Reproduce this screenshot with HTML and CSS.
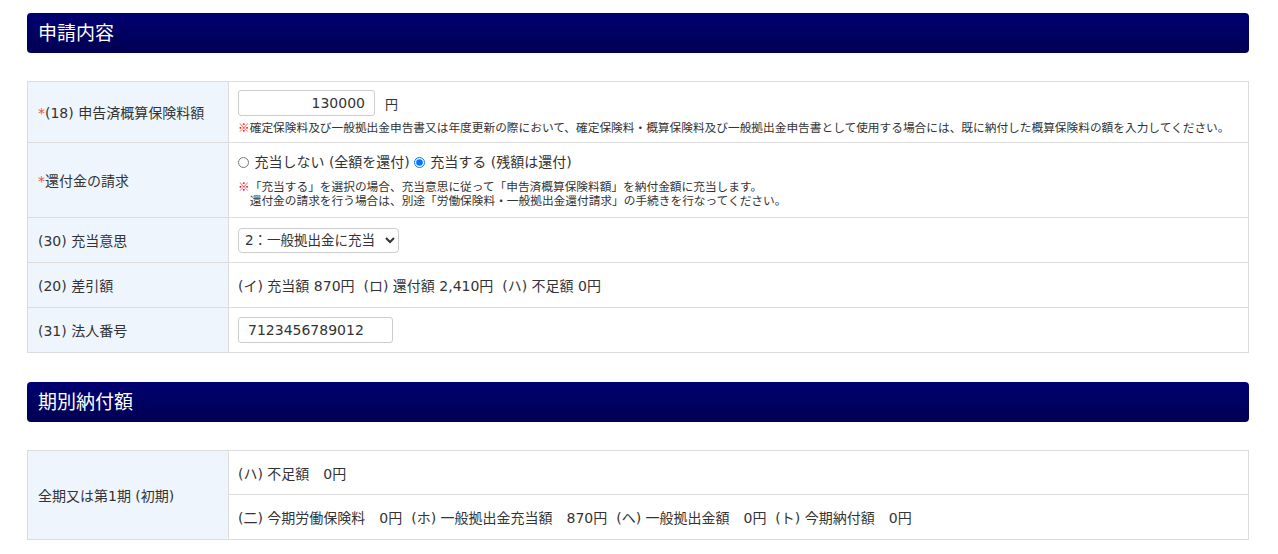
FILE: index.html
```html
<!DOCTYPE html>
<html lang="ja">
    <head>
        <meta charset="utf-8">
        <title>申請内容</title>
        <meta name="viewport" content="width=device-width,initial-scale=1">
        <link rel="stylesheet" href="styles.css">
    </head>
    <body>
        <main class="page">
            <section class="block">
                <h2 class="block-title">申請内容</h2>

                <table class="form-table">
                    <tr class="row-amount">
                        <th><span class="req">*</span>(18) 申告済概算保険料額</th>
                        <td>
                            <div class="field-line">
                                <input type="text" class="num-input" value="130000">
                                <span class="unit">円</span>
                            </div>
                            <p class="note"><span class="mark">※</span>確定保険料及び一般拠出金申告書又は年度更新の際において、確定保険料・概算保険料及び一般拠出金申告書として使用する場合には、既に納付した概算保険料の額を入力してください。</p>
                        </td>
                    </tr>
                    <tr class="row-refund">
                        <th><span class="req">*</span>還付金の請求</th>
                        <td>
                            <div class="radio-line">
                                <label><input type="radio" name="refund"> 充当しない (全額を還付)</label>
                                <label><input type="radio" name="refund" checked> 充当する (残額は還付)</label>
                            </div>
                            <div class="note note-multi">
                                <span class="note-line"><span class="mark">※</span>「充当する」を選択の場合、充当意思に従って「申告済概算保険料額」を納付金額に充当します。</span>
                                <span class="note-line indent">還付金の請求を行う場合は、別途「労働保険料・一般拠出金還付請求」の手続きを行なってください。</span>
                            </div>
                        </td>
                    </tr>
                    <tr class="row-plain">
                        <th>(30) 充当意思</th>
                        <td>
                            <select class="select">
                                <option>1：労働保険料に充当</option>
                                <option selected>2：一般拠出金に充当</option>
                            </select>
                        </td>
                    </tr>
                    <tr class="row-plain">
                        <th>(20) 差引額</th>
                        <td>(イ) 充当額 870円&nbsp; (ロ) 還付額 2,410円&nbsp; (ハ) 不足額 0円</td>
                    </tr>
                    <tr class="row-plain">
                        <th>(31) 法人番号</th>
                        <td><input type="text" class="text-input" value="7123456789012"></td>
                    </tr>
                </table>
            </section>

            <section class="block">
                <h2 class="block-title">期別納付額</h2>

                <table class="form-table">
                    <tr class="row-plain row-short">
                        <th rowspan="2">全期又は第1期 (初期)</th>
                        <td>(ハ) 不足額　0円</td>
                    </tr>
                    <tr class="row-plain">
                        <td>(二) 今期労働保険料　0円&nbsp; (ホ) 一般拠出金充当額　870円&nbsp; (ヘ) 一般拠出金額　0円&nbsp; (ト) 今期納付額　0円</td>
                    </tr>
                </table>
            </section>
        </main>
    </body>
</html>
```

FILE: styles.css
```css
html, body {
    margin: 0;
    padding: 0;
    background-color: #fff;
}

body {
    font-family: "DejaVu Sans", "Noto Sans CJK JP", sans-serif;
    font-size: 14px;
    color: #333;
}

.page {
    padding: 13px 29px 0 27px;
}

.block {
    margin-bottom: 29px;
}

.block-title {
    margin: 0 0 28px 0;
    height: 40px;
    line-height: 38px;
    padding: 0 11px;
    font-family: "Noto Sans CJK JP", sans-serif;
    font-size: 19px;
    font-weight: normal;
    color: #fff;
    border-radius: 4px;
    background: linear-gradient(#000072, #000052);
}

.form-table {
    width: 100%;
    border-collapse: collapse;
    border: 1px solid #dcdcdc;
}

.form-table th,
.form-table td {
    border: 1px solid #dcdcdc;
    text-align: left;
    vertical-align: middle;
    font-weight: normal;
}

.form-table th {
    width: 180px;
    padding: 0 10px;
    background-color: #eef5fd;
}

.form-table td {
    padding: 0 9px;
}

.req {
    color: #f0503c;
}

.row-amount td {
    padding-top: 8px;
    padding-bottom: 8px;
}

.row-amount th,
.row-refund th {
    height: 44px;
}

.row-plain th,
.row-plain td {
    height: 44px;
}

.row-short td {
    height: 43px;
}

.field-line {
    display: flex;
    align-items: center;
    gap: 10px;
}

.num-input,
.text-input {
    box-sizing: border-box;
    height: 26px;
    border: 1px solid #ccc;
    border-radius: 3px;
    padding: 0 9px;
    font-family: "DejaVu Sans", sans-serif;
    font-size: 14px;
    color: #333;
}

.num-input {
    width: 137px;
    text-align: right;
}

.text-input {
    width: 155px;
}

.unit {
    font-size: 13px;
}

.note {
    margin: 4px 0 0 0;
    font-family: "Noto Sans CJK JP", sans-serif;
    font-size: 11.7px;
    line-height: 14px;
}

.note-multi {
    margin-top: 7px;
}

.note-line {
    display: block;
    height: 14px;
}

.indent {
    padding-left: 1em;
}

.mark {
    color: #f00;
    font-weight: bold;
}

.row-refund td {
    padding-top: 9px;
    padding-bottom: 10px;
}

.radio-line {
    display: flex;
    gap: 4px;
    font-size: 14px;
    line-height: 20px;
}

.radio-line input {
    margin: 0 1px 0 0;
    width: 11px;
    height: 11px;
    vertical-align: -1px;
}

.select {
    height: 25px;
    width: 161px;
    border: 1px solid #ccc;
    border-radius: 4px;
    background-color: #fff;
    font-family: "DejaVu Sans", "Noto Sans CJK JP", sans-serif;
    font-size: 13.5px;
    color: #333;
    padding: 0 2px;
}
```
